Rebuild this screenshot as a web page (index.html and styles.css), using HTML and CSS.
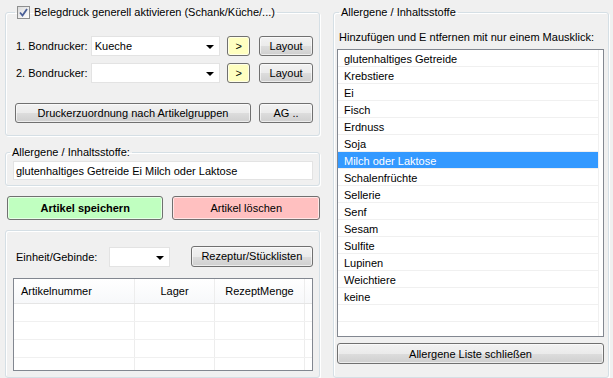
FILE: index.html
```html
<!DOCTYPE html>
<html lang="de">
<head>
  <meta charset="UTF-8">
  <title>Artikel bearbeiten</title>
  <link rel="stylesheet" href="styles.css">
</head>
<body>

<div class="window">
  <div class="col-left">

    <fieldset class="group printers">
      <legend>
        <label class="check">
          <span class="box"><svg width="9" height="9" viewBox="0 0 9 9"><path d="M1 4.5 L3.5 7.5 L8 1" fill="none" stroke="#4a5f97" stroke-width="1.8"/></svg></span>
          Belegdruck generell aktivieren (Schank/Küche/...)
        </label>
      </legend>
      <div class="row first">
        <span class="label">1. Bondrucker:</span>
        <div class="combo printer"><span>Kueche</span><i class="arrow"></i></div>
        <button class="btn yellow">&gt;</button>
        <button class="btn layout">Layout</button>
      </div>
      <div class="row second">
        <span class="label">2. Bondrucker:</span>
        <div class="combo printer"><span></span><i class="arrow"></i></div>
        <button class="btn yellow">&gt;</button>
        <button class="btn layout">Layout</button>
      </div>
      <div class="row assign">
        <button class="btn assign-btn">Druckerzuordnung nach Artikelgruppen</button>
        <button class="btn ag">AG ..</button>
      </div>
    </fieldset>

    <fieldset class="group allergen-box">
      <legend>Allergene / Inhaltsstoffe:</legend>
      <div class="textbox">glutenhaltiges Getreide Ei Milch oder Laktose</div>
    </fieldset>

    <div class="actions">
      <button class="btn save">Artikel speichern</button>
      <button class="btn delete">Artikel löschen</button>
    </div>

    <fieldset class="group recipe">
      <div class="row">
        <span class="label">Einheit/Gebinde:</span>
        <div class="combo unit"><span></span><i class="arrow"></i></div>
        <button class="btn recipe-btn">Rezeptur/Stücklisten</button>
      </div>
      <div class="grid">
        <div class="grid-head">
          <div class="cell c1">Artikelnummer</div>
          <div class="cell c2">Lager</div>
          <div class="cell c3">RezeptMenge</div>
          <div class="cell c4"></div>
        </div>
        <div class="grid-row"><div class="cell c1"></div><div class="cell c2"></div><div class="cell c3"></div><div class="cell c4"></div></div>
        <div class="grid-row"><div class="cell c1"></div><div class="cell c2"></div><div class="cell c3"></div><div class="cell c4"></div></div>
        <div class="grid-row"><div class="cell c1"></div><div class="cell c2"></div><div class="cell c3"></div><div class="cell c4"></div></div>
        <div class="grid-row"><div class="cell c1"></div><div class="cell c2"></div><div class="cell c3"></div><div class="cell c4"></div></div>
      </div>
    </fieldset>

  </div>

  <fieldset class="group col-right">
    <legend>Allergene / Inhaltsstoffe</legend>
    <p class="hint">Hinzufügen und E ntfernen mit nur einem Mausklick:</p>
    <ul class="list">
      <li>glutenhaltiges Getreide</li>
      <li>Krebstiere</li>
      <li>Ei</li>
      <li>Fisch</li>
      <li>Erdnuss</li>
      <li>Soja</li>
      <li class="selected">Milch oder Laktose</li>
      <li>Schalenfrüchte</li>
      <li>Sellerie</li>
      <li>Senf</li>
      <li>Sesam</li>
      <li>Sulfite</li>
      <li>Lupinen</li>
      <li>Weichtiere</li>
      <li>keine</li>
      <li></li>
      <li></li>
    </ul>
    <button class="btn close-btn">Allergene Liste schließen</button>
  </fieldset>
</div>

</body>
</html>
```

FILE: styles.css
```css
html, body { margin: 0; height: 100%; }
body {
  background: #f0f0f0;
  font-family: "Liberation Sans", Arial, sans-serif;
  font-size: 11px;
  color: #000;
  overflow: hidden;
}

.window { display: flex; gap: 13px; padding: 5px 0 0 5px; }
.col-left { width: 315px; display: flex; flex-direction: column; }

/* group boxes */
.group {
  margin: 0;
  border: 1px solid #d5dfe5;
  border-radius: 3px;
  box-shadow: inset 1px 1px #fff, 1px 1px #fff;
  min-width: 0;
}
.group legend { padding: 0 2px; line-height: 14px; height: 14px; }

.printers { padding: 17px 6px 12px 10px; }
.printers legend { margin-left: -1px; }
.check { display: flex; align-items: center; gap: 4px; }
.box {
  width: 11px; height: 11px;
  border: 1px solid #8e8f8f;
  background: linear-gradient(135deg, #dcdcdc, #fff);
  display: flex; align-items: center; justify-content: center;
}

.row { display: flex; align-items: center; height: 20px; }
.row.second { margin-top: 7px; }
.row.assign { margin-top: 20px; }
.label { width: 75px; }

.combo {
  height: 20px;
  box-sizing: border-box;
  background: #fff;
  border: 1px solid #e3e3e3;
  display: flex; align-items: center; justify-content: space-between;
  padding: 0 5px 0 3px;
}
.combo.printer { width: 130px; }
.combo.unit { width: 62px; margin-left: 2px; }
.arrow {
  width: 0; height: 0;
  border-left: 4px solid transparent;
  border-right: 4px solid transparent;
  border-top: 4px solid #000;
  margin-top: 1px;
}

.btn {
  font: inherit;
  color: #000;
  height: 20px;
  padding: 0;
  border: 1px solid #707070;
  border-radius: 3px;
  background: linear-gradient(#f2f2f2 0%, #ebebeb 50%, #dddddd 51%, #cfcfcf 100%);
  box-shadow: inset 0 0 0 1px rgba(255, 255, 255, 0.6);
}
.btn.yellow { width: 23px; margin-left: 7px; background: #ffffc0; }
.btn.layout { width: 54px; margin-left: 9px; }
.btn.assign-btn { width: 236px; margin-left: -1px; }
.btn.ag { width: 54px; margin-left: 8px; }

.allergen-box { margin-top: 9px; padding: 2px 6px 5px 7px; }
.allergen-box legend { margin-left: -3px; }
.textbox {
  height: 19px;
  box-sizing: border-box;
  background: #fff;
  border: 1px solid #e3e3e3;
  padding: 2px 2px;
  line-height: 14px;
}

.actions { display: flex; gap: 9px; margin-top: 10px; padding-left: 2px; }
.btn.save { width: 157px; height: 24px; background: #c0ffc0; font-weight: bold; }
.btn.delete { width: 148px; height: 24px; background: #ffc0c0; }

.recipe { margin-top: 10px; padding: 16px 6px 7px 7px; height: 148px; box-sizing: border-box; }
.recipe .row .label { width: 93px; padding-left: 3px; }
.btn.recipe-btn { width: 125px; margin-left: 21px; height: 21px; margin-top: -2px; }

.grid {
  margin-top: 11px;
  width: 300px; height: 93px;
  box-sizing: border-box;
  border: 1px solid #828790;
  background: #fff;
  overflow: hidden;
}
.grid-head, .grid-row { display: flex; }
.grid-head { height: 24px; line-height: 24px; background: linear-gradient(#fff, #f7f8fa); border-bottom: 1px solid #e5e5e5; }
.grid-row { height: 17px; border-bottom: 1px solid #f0f0f0; }
.cell { box-sizing: border-box; border-right: 1px solid #ededed; }
.c1 { width: 121px; padding-left: 7px; }
.c2 { width: 80px; text-align: center; }
.c3 { width: 90px; text-align: center; }
.c4 { flex: 1; border-right: 0; }

/* right side */
.col-right { width: 276px; box-sizing: border-box; height: 373px; padding: 11px 4px 11px 3px; }
.col-right legend { margin-left: 2px; }
.hint { margin: 0 0 0 2px; line-height: 14px; }
.list {
  list-style: none;
  margin: 5px 0 0;
  padding: 0;
  height: 288px;
  box-sizing: border-box;
  border: 1px solid #828790;
  background: #fff;
  overflow: hidden;
}
.list li {
  height: 17px;
  box-sizing: border-box;
  line-height: 15px;
  padding: 2px 0 0 6px;
  margin-right: 4px;
  border-bottom: 1px solid #f0f0f0;
  border-right: 1px solid #f0f0f0;
}
.list li.selected { background: #3399ff; color: #fff; }
.btn.close-btn { width: 100%; height: 21px; margin-top: 6px; }
```
